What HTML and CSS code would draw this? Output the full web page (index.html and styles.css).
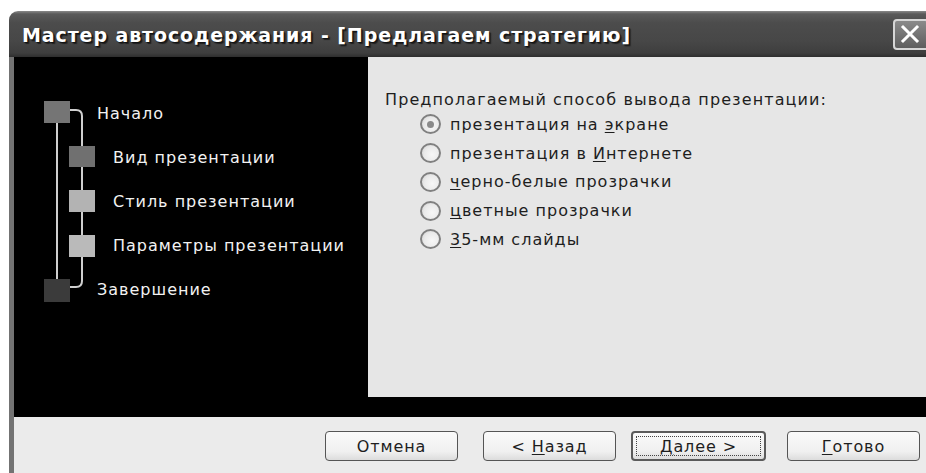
FILE: index.html
```html
<!DOCTYPE html>
<html lang="ru">
<head>
<meta charset="utf-8">
<title>Мастер автосодержания</title>
<link rel="stylesheet" href="styles.css">
</head>
<body>
<div class="window">
  <div class="titlebar">
    <span class="title">Мастер автосодержания - [Предлагаем стратегию]</span>
    <span class="close" aria-label="Закрыть">
      <svg width="22" height="22" viewBox="0 0 22 22"><path d="M4 4 L18 18 M18 4 L4 18" stroke="#fff" stroke-width="3" stroke-linecap="square"/></svg>
    </span>
  </div>
  <div class="frame">
    <div class="main">
      <div class="side">
        <svg class="map" width="354" height="320" viewBox="0 0 354 320">
          <path d="M43 66 V222" stroke="#cfcfcf" stroke-width="2" fill="none"/>
          <path d="M56 53 H62 Q68 53 68 59 V224 Q68 230 62 230 H56" stroke="#cfcfcf" stroke-width="2" fill="none"/>
          <rect x="30" y="44" width="26" height="22" fill="#757575"/>
          <rect x="55" y="89" width="26" height="21" fill="#707070"/>
          <rect x="55" y="133" width="26" height="22" fill="#b3b3b3"/>
          <rect x="55" y="178" width="26" height="22" fill="#bababa"/>
          <rect x="30" y="222" width="26" height="23" fill="#3b3b3b"/>
        </svg>
        <ul class="steps">
          <li class="step">Начало</li>
          <li class="step sub">Вид презентации</li>
          <li class="step sub">Стиль презентации</li>
          <li class="step sub">Параметры презентации</li>
          <li class="step">Завершение</li>
        </ul>
      </div>
      <div class="content">
        <p class="question">Предполагаемый способ вывода презентации:</p>
        <ul class="options">
          <li class="option"><span class="radio checked"></span><span class="label">презентация на <u>э</u>кране</span></li>
          <li class="option"><span class="radio"></span><span class="label">презентация в <u>И</u>нтернете</span></li>
          <li class="option"><span class="radio"></span><span class="label"><u>ч</u>ерно-белые прозрачки</span></li>
          <li class="option"><span class="radio"></span><span class="label"><u>ц</u>ветные прозрачки</span></li>
          <li class="option"><span class="radio"></span><span class="label"><u>3</u>5-мм слайды</span></li>
        </ul>
      </div>
    </div>
    <div class="footer">
      <button class="btn">Отмена</button>
      <button class="btn back">&lt; <u>Н</u>азад</button>
      <button class="btn next"><span class="focus"><u>Д</u>алее &gt;</span></button>
      <button class="btn done"><u>Г</u>отово</button>
    </div>
  </div>
</div>
</body>
</html>
```
FILE: styles.css
```css
html, body {
  margin: 0;
  padding: 0;
  background: #fff;
}

body {
  font-family: "DejaVu Sans", Verdana, sans-serif;
  overflow: hidden;
}

.window {
  margin: 11px 0 0 9px;
  width: 930px;
}

/* title bar */
.titlebar {
  height: 46px;
  display: flex;
  align-items: center;
  border-radius: 9px 9px 0 0;
  background: linear-gradient(#8a8a8a 0, #5a5a5a 3px, #4c4c4c 12px, #474747 30px, #3e3e3e 42px, #2e2e2e 46px);
  box-sizing: border-box;
  padding: 0 0 0 13px;
}

.title {
  color: #fff;
  font-weight: bold;
  font-size: 19px;
  letter-spacing: 0.9px;
  text-shadow: 1px 1px 1px #111, 2px 2px 1px #222;
  flex: 1;
  padding-top: 1px;
}

.close {
  width: 36px;
  height: 31px;
  margin-right: 10px;
  box-sizing: border-box;
  border: 2px solid #d6d6d6;
  border-radius: 4px;
  background: linear-gradient(#8a8a8a, #5e5e5e);
  display: flex;
  align-items: center;
  justify-content: flex-start;
  padding-left: 4px;
}

/* window frame */
.frame {
  border-left: 5px solid #737373;
  background: #000;
}

.main {
  display: flex;
  height: 360px;
  box-sizing: border-box;
  padding-bottom: 20px;
  background: #000;
}

.side {
  position: relative;
  width: 354px;
  flex: none;
  background: #000;
}

.map {
  position: absolute;
  left: 0;
  top: 0;
}

.steps {
  list-style: none;
  margin: 0;
  padding: 34px 0 0 0;
  position: relative;
}

.step {
  height: 44px;
  display: flex;
  align-items: center;
  padding-left: 83px;
  color: #f2f2f2;
  font-size: 16px;
  letter-spacing: 1px;
}

.step.sub {
  padding-left: 99px;
}

/* right panel */
.content {
  flex: 1;
  background: #e6e6e6;
  padding: 31px 0 0 17px;
  color: #1e1e1e;
  font-size: 16px;
}

.question {
  margin: 0;
  height: 24px;
  line-height: 24px;
  letter-spacing: 1.1px;
}

.options {
  list-style: none;
  margin: -2px 0 0 0;
  padding: 0 0 0 35px;
}

.option {
  height: 28.75px;
  display: flex;
  align-items: center;
  letter-spacing: 1px;
}

.radio {
  width: 21px;
  height: 20px;
  box-sizing: border-box;
  border: 2px solid #808080;
  border-radius: 50%;
  background: radial-gradient(circle at 60% 60%, #f7f7f7 0, #eaeaea 55%, #cfcfcf 100%);
  margin-right: 9px;
  flex: none;
  display: flex;
  align-items: center;
  justify-content: center;
}

.radio.checked::after {
  content: "";
  width: 7px;
  height: 7px;
  border-radius: 50%;
  background: #8a8a8a;
}

u {
  text-decoration-thickness: 1px;
  text-underline-offset: 2px;
}

/* bottom buttons */
.footer {
  height: 56px;
  background: #ebebeb;
  display: flex;
  align-items: flex-start;
  padding: 14px 0 0 311px;
  box-sizing: border-box;
}

.btn {
  font-family: "DejaVu Sans", Verdana, sans-serif;
  font-size: 16px;
  color: #1e1e1e;
  width: 133px;
  height: 30px;
  padding: 0;
  box-sizing: border-box;
  border: 1.5px solid #555;
  border-radius: 4px;
  background: linear-gradient(#fafafa, #f0f0f0 70%, #dcdcdc);
  letter-spacing: 0.9px;
}

.btn.back {
  margin-left: 25px;
}

.btn.next {
  margin-left: 15px;
  width: 135px;
  border: 2px solid #5a5a5a;
  padding: 3px;
}

.btn.next .focus {
  display: flex;
  align-items: center;
  justify-content: center;
  height: 100%;
  border: 1px dotted #444;
  box-sizing: border-box;
}

.btn.done {
  margin-left: 21px;
}
```
